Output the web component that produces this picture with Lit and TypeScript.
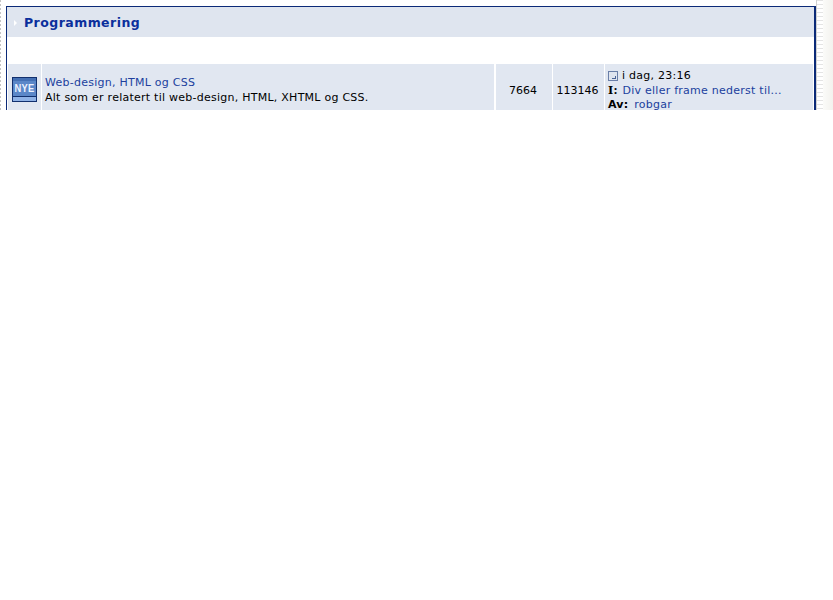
import { LitElement, html, css } from "lit";
import { customElement } from "lit/decorators.js";

@customElement("app-root")
export class AppRoot extends LitElement {
  static styles = css`
    :host { display: block; font-family: "DejaVu Sans", Verdana, sans-serif; font-size: 11px; letter-spacing: 0.25px; color: #000; background: #fff; }
    .page { height: 110px; overflow: hidden; display: flex; align-items: flex-start; }
    .edge-l { width: 6px; height: 110px; flex: none; background: repeating-linear-gradient(to bottom, #c4c4c4 0 2px, #fff 2px 4px) 0 0 / 1px 100% no-repeat; }
    .edge-r { flex: 1; height: 110px; display: flex; }
    .rail { width: 6px; border-left: 1px solid #d0d0d0; background: repeating-linear-gradient(to bottom, #e4e4e4 0 1px, #fff 1px 4px); }
    .fade { flex: 1; background: linear-gradient(to right, #fbfbf9, #f3f2ee); }
    .panel { width: 810px; flex: none; margin-top: 6px; height: 104px; box-sizing: border-box; border: 1px solid #0b2a78; border-bottom: 0; border-right-width: 2px; overflow: hidden; }
    .head { height: 30px; background: #dfe5ef; display: flex; align-items: center; gap: 7px; padding: 1px 0 0 7px; box-sizing: border-box; font-weight: 700; font-size: 12.5px; color: #0b2f9c; letter-spacing: 0.45px; }
    .arrow { width: 0; height: 0; border-left: 3px solid #fff; border-top: 3px solid transparent; border-bottom: 3px solid transparent; margin-top: 1px; }
    .gap { height: 27px; }
    .row { display: flex; height: 46px; margin: 0 1px; }
    .row > div { background: #e1e7f1; }
    .ico { width: 33px; flex: none; display: flex; justify-content: center; padding-top: 13px; box-sizing: border-box; }
    .info { flex: 1; margin-left: 1px; padding: 11px 0 0 3px; line-height: 15px; }
    .num { flex: none; display: flex; justify-content: center; padding: 19px 2px 0 0; box-sizing: border-box; line-height: 15px; margin-left: 1px; letter-spacing: 0; }
    .n1 { width: 56px; margin-left: 2px; }
    .n2 { width: 51px; }
    .last { width: 208px; flex: none; box-sizing: border-box; margin-left: 1px; padding: 5px 0 0 3px; line-height: 14.5px; }
    a { color: #203f9e; text-decoration: none; }
    .time { display: flex; align-items: center; gap: 4px; }
    .serif { font-family: "DejaVu Serif", serif; margin-right: 1px; }
    .by { margin-right: 2px; }
    svg { display: block; flex: none; }
  `;
  render() {
    return html`<div class="page">
      <div class="edge-l"></div>
      <div class="panel">
        <div class="head"><span class="arrow"></span><span>Programmering</span></div>
        <div class="gap"></div>
        <div class="row">
          <div class="ico">
            <svg width="25" height="25" viewBox="0 0 25 25">
              <rect x="0.5" y="0.5" width="24" height="24" fill="#5b87c8" stroke="#12306e"/>
              <rect x="1" y="1" width="23" height="3" fill="#4470b4"/>
              <rect x="1" y="19" width="23" height="5" fill="#8fb2e6"/>
              <line x1="1" y1="19.5" x2="24" y2="19.5" stroke="#12306e"/>
              <text transform="translate(12.5 15) scale(0.85 1)" text-anchor="middle" font-family="Liberation Sans, sans-serif" font-size="11" font-weight="700" fill="#eef3ff">NYE</text>
            </svg>
          </div>
          <div class="info"><a href="#">Web-design, HTML og CSS</a><br>Alt som er relatert til web-design, HTML, XHTML og CSS.</div>
          <div class="num n1">7664</div>
          <div class="num n2">113146</div>
          <div class="last">
            <div class="time">
              <svg width="10" height="10" viewBox="0 0 10 10">
                <rect x="0.5" y="0.5" width="9" height="9" fill="#dfe5ef" stroke="#6a7fa8"/>
                <path d="M4 8h4V5H7v2H4z" fill="#4a6496"/>
              </svg>
              <span>i dag, 23:16</span>
            </div>
            <div><b class="serif">I:</b> <a href="#">Div eller frame nederst til...</a></div>
            <div><b class="by">Av:</b> <a href="#">robgar</a></div>
          </div>
        </div>
      </div>
      <div class="edge-r"><div class="rail"></div><div class="fade"></div></div>
    </div>`;
  }
}
